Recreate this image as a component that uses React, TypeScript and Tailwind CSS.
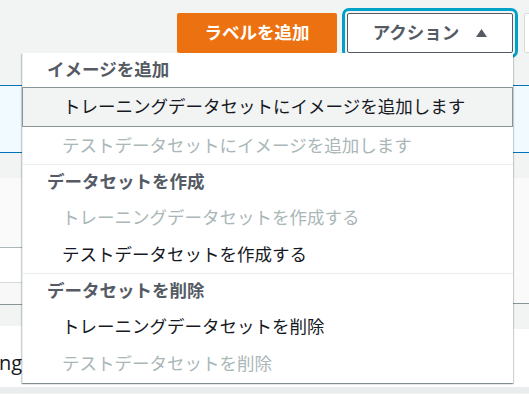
import { useState } from "react";

type Item = { label: string; disabled?: boolean };
type Group = { title: string; items: Item[] };

const groups: Group[] = [
  {
    title: "イメージを追加",
    items: [
      { label: "トレーニングデータセットにイメージを追加します" },
      { label: "テストデータセットにイメージを追加します", disabled: true },
    ],
  },
  {
    title: "データセットを作成",
    items: [
      { label: "トレーニングデータセットを作成する", disabled: true },
      { label: "テストデータセットを作成する" },
    ],
  },
  {
    title: "データセットを削除",
    items: [
      { label: "トレーニングデータセットを削除" },
      { label: "テストデータセットを削除", disabled: true },
    ],
  },
];

function ActionMenu() {
  const [hovered] = useState("トレーニングデータセットにイメージを追加します");

  return (
    <div className="absolute left-[22px] top-[53px] w-[491px] bg-white shadow-[0_1px_1px_0_rgba(0,28,36,0.3),1px_1px_1px_0_rgba(0,28,36,0.15),-1px_1px_1px_0_rgba(0,28,36,0.15)] border-l border-[#eaeded] pb-[1px]">
      {groups.map((group, gi) => (
        <div key={group.title} className={gi > 0 ? "border-t border-[#eaeded]" : ""}>
          <div className="h-[34px] flex items-center pl-[24px] text-[17.5px] font-bold text-[#545b64] leading-none">
            {group.title}
          </div>
          {group.items.map((item) => {
            const isHover = item.label === hovered;
            return (
              <div
                key={item.label}
                className={`flex items-center pl-[39px] text-[17.5px] leading-none ${
                  isHover
                    ? "h-[40px] -ml-px pl-[40px] bg-[#f2f3f3] border border-[#879596] text-[#16191f]"
                    : item.disabled
                      ? "h-[37px] text-[#aab7b8]"
                      : "h-[37px] text-[#16191f]"
                }`}
              >
                {item.label}
              </div>
            );
          })}
        </div>
      ))}
    </div>
  );
}

function LeftStrip() {
  return (
    <div className="w-[40px] shrink-0 flex flex-col">
      <div className="h-[25px] bg-[#f2f3f3]" />
      <div className="h-[70px] bg-[#fafafa] border-b border-[#aab7b8]" />
      <div className="h-[35px] bg-white border-b border-[#d5dbdb]" />
      <div className="h-[22px] bg-[#f8f8f8] border-b border-[#879596]" />
      <div className="h-[21px] bg-[#f2f3f3]" />
      <div className="flex-1 bg-white flex items-end text-[20px] text-[#16191f] leading-none pb-[14px] -ml-[1px]">
        ng
      </div>
    </div>
  );
}

function RightStrip() {
  return (
    <div className="flex-1 flex flex-col">
      <div className="h-[25px] bg-[#f2f3f3]" />
      <div className="h-[126px] bg-[#fafafa] border-b border-[#879596]" />
      <div className="h-[25px] bg-[#f2f3f3]" />
      <div className="flex-1 bg-white" />
    </div>
  );
}

export default function App() {
  return (
    <div className="relative w-[529px] h-[394px] overflow-hidden bg-[#f2f3f3] font-['Open_Sans','Noto_Sans_CJK_JP',sans-serif]">
      <div className="h-[86px] border-b border-[#0073bb] flex items-start pt-[13px] pl-[177px] gap-[10px]">
        <button className="w-[160px] h-[40px] shrink-0 rounded-[2px] bg-[#ec7211] text-white text-[17.5px] font-bold leading-none flex items-center justify-center">
          ラベルを追加
        </button>
        <button className="w-[166px] h-[40px] shrink-0 rounded-[2px] bg-white border border-[#545b64] text-[#545b64] text-[17.5px] font-bold leading-none flex items-center justify-center outline-[3px] outline-solid outline-[#00a1c9] outline-offset-[2px]">
          アクション
          <svg width="11" height="8" viewBox="0 0 11 8" className="ml-[17px]">
            <path d="M5.5 0 L11 8 L0 8 Z" fill="#545b64" />
          </svg>
        </button>
        <div className="ml-px w-[60px] h-[40px] shrink-0 rounded-[2px] bg-white border border-[#d5dbdb]" />
      </div>
      <div className="h-[67px] bg-[#f1faff] border-b border-[#0073bb]" />
      <div className="h-[234px] flex">
        <LeftStrip />
        <RightStrip />
      </div>
      <div className="h-[6px] bg-[#eaeded]" />
      <ActionMenu />
    </div>
  );
}
